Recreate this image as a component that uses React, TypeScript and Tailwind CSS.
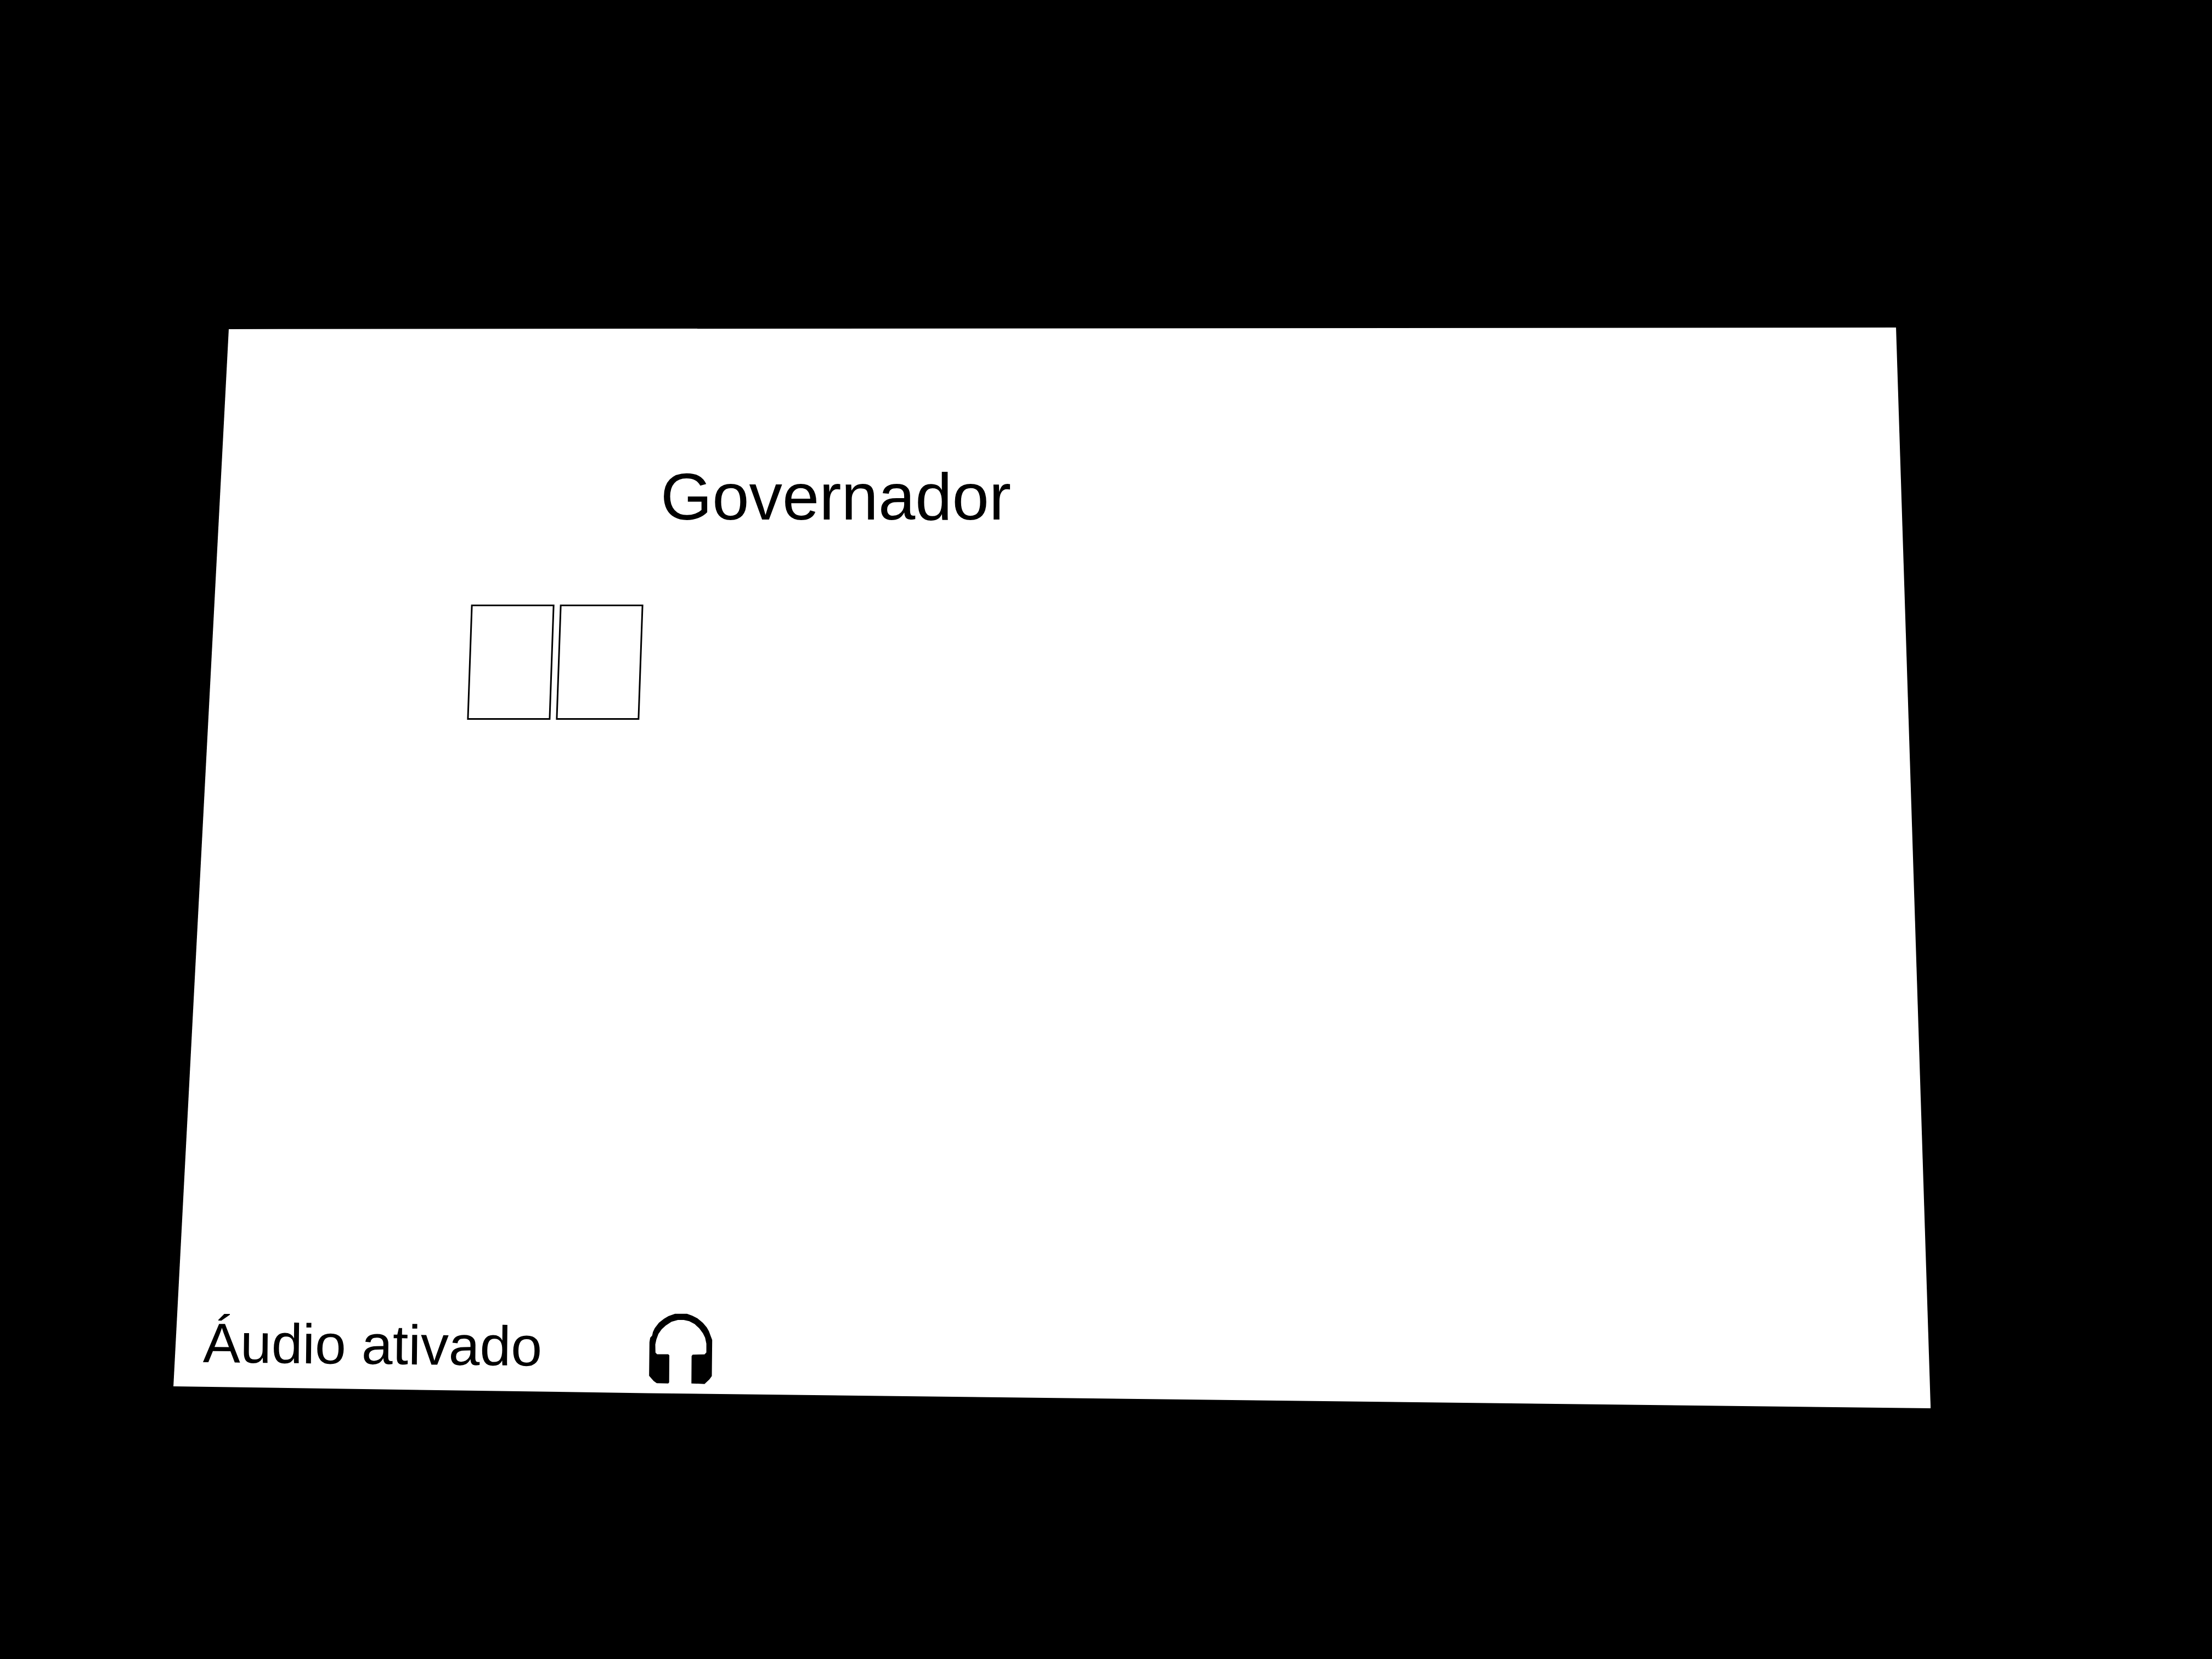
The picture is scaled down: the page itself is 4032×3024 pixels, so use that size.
function HeadphonesIcon() {
  return (
    <svg
      viewBox="130 104 348 388"
      className="h-[129px] w-[116px] shrink-0 fill-black"
      aria-hidden="true"
    >
      <path d="M132 262 L136 238 L147 225 L151 206 L161 185 L184 155 L212 133 L236 119 L272 106 L338 106 L367 117 L395 131 L425 156 L446 181 L458 202 L468 229 L476 250 L474 448 L461 466 L434 491 L362 488 L363 338 L369 330 L434 329 L444 318 L444 270 L437 237 L425 213 L405 186 L380 163 L350 147 L320 140 L288 140 L253 150 L221 171 L199 191 L181 217 L170 247 L164 275 L165 319 L174 328 L235 328 L241 334 L240 482 L235 488 L172 487 L155 475 L130 446 Z" />
    </svg>
  );
}

function DigitBox({ label }: { label: string }) {
  return (
    <input
      type="text"
      inputMode="numeric"
      maxLength={1}
      aria-label={label}
      className="h-[210px] w-[152px] -skew-x-2 border-3 border-black bg-white text-center text-[120px] text-black outline-none"
    />
  );
}

export default function App() {
  return (
    <div className="flex min-h-screen w-full bg-black pt-[597px] pr-[12.72%] pb-[457px] pl-[7.84%] font-['Liberation_Sans',Arial,sans-serif] text-black">
      <main className="flex flex-1 flex-col bg-white pb-11 [clip-path:polygon(3.15%_0.15%,98.03%_0%,100%_100%,27%_98.6%,0%_97.97%)]">
        <h1 className="mt-[248px] ml-[888px] text-[121px] leading-[120px]">Governador</h1>
        <form className="mt-[137px] ml-[539px] flex gap-2.5">
          <DigitBox label="Primeiro dígito" />
          <DigitBox label="Segundo dígito" />
        </form>
        <footer className="mt-auto ml-[54px] flex items-start gap-[195px]">
          <p className="origin-left rotate-[0.6deg] text-[102px] leading-[108px] whitespace-nowrap">
            Áudio ativado
          </p>
          <HeadphonesIcon />
        </footer>
      </main>
    </div>
  );
}
